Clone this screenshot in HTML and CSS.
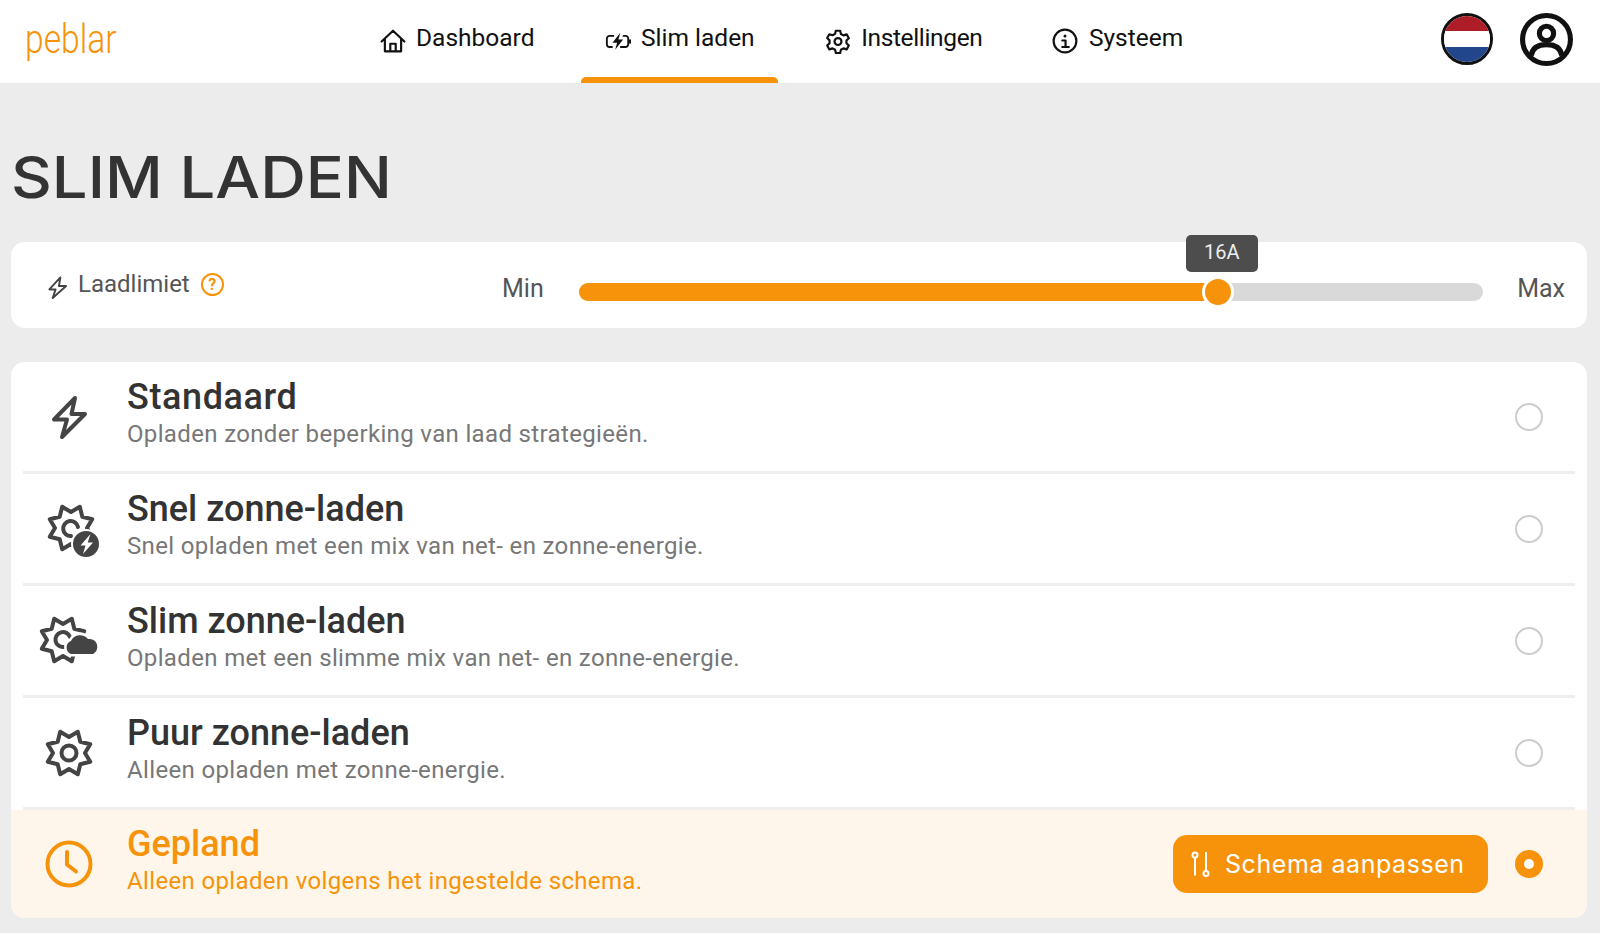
FILE: index.html
```html
<!DOCTYPE html>
<html lang="nl">

<head>
    <meta charset="UTF-8">
    <title>Slim laden</title>
    <link rel="stylesheet" href="styles.css">
</head>

<body>
    <!-- Shared star shape for the solar icons -->
    <svg class="defs" width="0" height="0">
        <symbol id="sun" viewBox="0 0 48 48">
            <polygon points="32.8,2.8 35.3,12.7 45.2,15.2 40,24 45.2,32.8 35.3,35.3 32.8,45.2 24,40 15.2,45.2 12.7,35.3 2.8,32.8 8,24 2.8,15.2 12.7,12.7 15.2,2.8 24,8" fill="none" stroke="currentColor" stroke-width="4" stroke-linejoin="round" />
        </symbol>
    </svg>

    <header class="topbar">
        <div class="logo">peblar</div>
        <nav class="nav">
            <a class="nav-item">
                <svg class="nav-icon" viewBox="0 0 24 24"><path d="M1.500 12.500 12 2.500l10.500 10M4.500 10v11.500h15V10M9.500 21.500v-7h5v7" /></svg>
                <span>Dashboard</span>
            </a>
            <a class="nav-item active">
                <svg class="nav-icon" viewBox="0 0 28 24"><path d="M9 6.500H5a3 3 0 0 0-3 3v6a3 3 0 0 0 3 3h2.500M20 6.500h2a3 3 0 0 1 3 3v6a3 3 0 0 1-3 3h-5M27 11v3" /><path class="solid" d="M16.500 3 8 14h5L11 21.500 19.500 10.500h-5z" /></svg>
                <span>Slim laden</span>
            </a>
            <a class="nav-item tight">
                <svg class="nav-icon" viewBox="0 0 24 24"><path d="M10 2.500h4l.7 3 2.300 1.300 3-.9 2 3.500-2.200 2.100v2.600l2.200 2.100-2 3.500-3-.9-2.300 1.300-.7 3h-4l-.7-3L7 18.800l-3 .9-2-3.500L4.200 14v-2.600L2 9.300l2-3.500 3 .9 2.300-1.300z" /><circle cx="12" cy="12.500" r="3.200" /></svg>
                <span>Instellingen</span>
            </a>
            <a class="nav-item">
                <svg class="nav-icon" viewBox="0 0 24 24"><circle cx="12" cy="12" r="10.500" /><path d="M9.500 11.500H12.500V17M9.500 17.500h6" /><circle class="solid" cx="12" cy="7.300" r="1.400" /></svg>
                <span>Systeem</span>
            </a>
        </nav>
        <div class="top-actions">
            <div class="flag"><span class="red"></span><span class="white"></span><span class="blue"></span></div>
            <svg class="user" viewBox="0 0 52 52"><circle cx="26" cy="26" r="23.500" /><circle cx="26" cy="20" r="7" /><path d="M11 42c1-8 7-11 15-11s14 3 15 11" /></svg>
        </div>
    </header>

    <main class="page">
        <h1>SLIM LADEN</h1>

        <section class="card limit">
            <div class="limit-label">
                <svg class="limit-bolt" viewBox="0 0 24 24"><path d="M15 1.500 3.500 14h6.500L7 23 21 10.500h-7.500z" /></svg>
                <span>Laadlimiet</span>
                <span class="help">?</span>
            </div>
            <span class="range-text">Min</span>
            <div class="slider">
                <div class="slider-fill" style="width: 70.650%"></div>
                <div class="slider-thumb" style="left: 70.650%"></div>
                <div class="slider-tip" style="left: 71.100%">16A</div>
            </div>
            <span class="range-text">Max</span>
        </section>

        <section class="card modes">
            <div class="mode">
                <div class="mode-icon">
                    <svg width="48" height="48" viewBox="0 0 48 48"><path class="line bold" d="M30 5 9 26.500h13L17 44 40 21H26.500z" /></svg>
                </div>
                <div class="mode-text">
                    <h2>Standaard</h2>
                    <p>Opladen zonder beperking van laad strategieën.</p>
                </div>
                <span class="radio"></span>
            </div>
            <div class="mode">
                <div class="mode-icon">
                    <svg class="shift" width="56" height="64" viewBox="0 0 56 64">
                        <use href="#sun" x="0" y="7" width="48" height="48" />
                        <path class="line bold" d="M31 30a7.500 7.500 0 1 0-7 9" />
                        <circle class="badge" cx="39" cy="47" r="14" />
                        <path class="badge-bolt" d="M43.500 37 33.500 48.500h5L36 57l10-11.500h-5.300z" />
                    </svg>
                </div>
                <div class="mode-text">
                    <h2>Snel zonne-laden</h2>
                    <p>Snel opladen met een mix van net- en zonne-energie.</p>
                </div>
                <span class="radio"></span>
            </div>
            <div class="mode">
                <div class="mode-icon">
                    <svg width="62" height="56" viewBox="0 0 62 56">
                        <use href="#sun" x="1" y="3" width="48" height="48" />
                        <path class="line bold" d="M32 24a7.500 7.500 0 1 0-6 10" />
                        <path class="cloud-gap" d="M33 41a7 7 0 0 1 0-13 10 10 0 0 1 17-2 8 8 0 0 1 5 15z" />
                        <path class="cloud" d="M33 41a7 7 0 0 1 0-13 10 10 0 0 1 17-2 8 8 0 0 1 5 15z" />
                    </svg>
                </div>
                <div class="mode-text">
                    <h2>Slim zonne-laden</h2>
                    <p>Opladen met een slimme mix van net- en zonne-energie.</p>
                </div>
                <span class="radio"></span>
            </div>
            <div class="mode">
                <div class="mode-icon">
                    <svg width="48" height="48" viewBox="0 0 48 48">
                        <use href="#sun" width="48" height="48" />
                        <circle class="line bold" cx="24" cy="24" r="7.500" />
                    </svg>
                </div>
                <div class="mode-text">
                    <h2>Puur zonne-laden</h2>
                    <p>Alleen opladen met zonne-energie.</p>
                </div>
                <span class="radio"></span>
            </div>
            <div class="mode selected">
                <div class="mode-icon">
                    <svg width="48" height="48" viewBox="0 0 48 48"><circle class="line bold" cx="24" cy="24" r="21.500" /><path class="line bold" d="M22 12v12.500l9 7" /></svg>
                </div>
                <div class="mode-text">
                    <h2>Gepland</h2>
                    <p>Alleen opladen volgens het ingestelde schema.</p>
                </div>
                <button class="schedule-btn">
                    <svg width="20" height="26" viewBox="0 0 20 26"><circle cx="4" cy="4" r="2.500" /><path d="M4 6.500V24.500M15 1v19" /><circle cx="15" cy="22.500" r="2.500" /></svg>
                    <span>Schema aanpassen</span>
                </button>
                <span class="radio on"></span>
            </div>
        </section>
    </main>
</body>

</html>
```

FILE: styles.css
```css
body {
    margin: 0;
    background-color: #ececec;
    font-family: 'Roboto', sans-serif;
    color: #333;
}

.defs {
    position: absolute;
}

/* Header */
.topbar {
    display: flex;
    align-items: center;
    height: 83px;
    background-color: #fff;
}

.logo {
    width: 356px;
    padding-left: 25px;
    padding-bottom: 5px;
    box-sizing: border-box;
    font-size: 40px;
    font-weight: 300;
    color: #f7930a;
    transform: scaleX(.84);
    transform-origin: 25px 0;
}

.nav {
    display: flex;
    gap: 23px;
    height: 100%;
}

.nav-item {
    display: flex;
    align-items: center;
    gap: 10.500px;
    padding: 0 23.500px 8px;
    font-size: 24.500px;
    color: #111;
    box-sizing: border-box;
    position: relative;
}

.nav-item.tight {
    letter-spacing: -.35px;
}

.nav-item.active::after {
    content: "";
    position: absolute;
    left: 0;
    right: 0;
    bottom: 0;
    height: 6px;
    background-color: #f7930a;
    border-radius: 5px 5px 0 0;
}

.nav-icon {
    width: 26px;
    height: 26px;
    margin-top: 6px;
    fill: none;
    stroke: #111;
    stroke-width: 2;
    stroke-linejoin: round;
    stroke-linecap: round;
}

.nav-icon .solid {
    fill: #111;
    stroke: none;
}

.top-actions {
    display: flex;
    align-items: center;
    gap: 27px;
    margin-left: auto;
    margin-right: 27px;
    padding-bottom: 5px;
}

.flag {
    display: flex;
    flex-direction: column;
    width: 52px;
    height: 52px;
    box-sizing: border-box;
    border: 3px solid #111;
    border-radius: 50%;
    overflow: hidden;
}

.flag span {
    flex: 1;
}

.flag .red {
    background-color: #ae1c28;
}

.flag .white {
    background-color: #fff;
}

.flag .blue {
    background-color: #21468b;
}

.user {
    width: 53px;
    height: 53px;
    fill: none;
    stroke: #111;
    stroke-width: 5;
}

/* Page */
.page {
    padding: 0 13px 0 11px;
}

h1 {
    width: fit-content;
    margin: 0;
    padding-top: 61px;
    height: 98px;
    font-family: 'Inter', sans-serif;
    font-size: 57px;
    line-height: 68px;
    font-weight: 500;
    color: #333;
    transform: scaleX(1.11);
    transform-origin: 0 0;
}

.card {
    background-color: #fff;
    border-radius: 14px;
}

.limit {
    display: flex;
    align-items: center;
    height: 86px;
    padding: 0 22px 0 35px;
    box-sizing: border-box;
    font-size: 25px;
}

.limit-label {
    display: flex;
    align-items: center;
    gap: 9px;
    width: 456px;
    padding-bottom: 2px;
    color: #555;
    font-size: 24px;
}

.limit-bolt {
    width: 23px;
    height: 27px;
    margin-top: 6px;
    fill: none;
    stroke: #444;
    stroke-width: 2;
    stroke-linejoin: round;
}

.help {
    display: flex;
    align-items: center;
    justify-content: center;
    width: 19px;
    height: 19px;
    margin-left: 2px;
    border: 2px solid #f7930a;
    border-radius: 50%;
    font-size: 16px;
    font-weight: 700;
    color: #f7930a;
}

.range-text {
    color: #555;
    padding-top: 6px;
}

.slider {
    position: relative;
    flex: 1;
    height: 18px;
    margin: 14px 34px 0 35px;
    background-color: #d9d9d9;
    border-radius: 9px;
}

.slider-fill {
    height: 100%;
    background-color: #f7930a;
    border-radius: 9px 0 0 9px;
}

.slider-thumb {
    position: absolute;
    top: 50%;
    width: 26px;
    height: 26px;
    transform: translate(-50%, -50%);
    background-color: #f7930a;
    border: 3px solid #fff;
    border-radius: 50%;
}

.slider-tip {
    position: absolute;
    top: -48px;
    width: 72px;
    height: 37px;
    line-height: 35px;
    transform: translateX(-50%);
    background-color: #4d4d4d;
    border-radius: 5px;
    color: #eee;
    font-size: 20px;
    text-align: center;
}

/* Charging modes */
.modes {
    margin-top: 34px;
    overflow: hidden;
}

.mode {
    display: flex;
    align-items: center;
    height: 109px;
    margin: 0 12px;
    padding-right: 32px;
    border-bottom: 3px solid #eee;
}

.mode-icon {
    display: flex;
    justify-content: center;
    width: 92px;
    margin-right: 12px;
    color: #444;
}

.shift {
    margin-left: 12px;
}

.line {
    fill: none;
    stroke: currentColor;
    stroke-width: 3.600;
    stroke-linejoin: round;
    stroke-linecap: round;
}

.line.bold {
    stroke-width: 4;
}

.badge {
    fill: #444;
    stroke: #fff;
    stroke-width: 2;
}

.badge-bolt {
    fill: #fff;
}

.cloud {
    fill: #444;
}

.cloud-gap {
    fill: none;
    stroke: #fff;
    stroke-width: 5;
}

.mode-text {
    flex: 1;
    padding-bottom: 6px;
}

.mode-text h2 {
    margin: 0;
    font-size: 36px;
    line-height: 40px;
    font-weight: 500;
    color: #333;
}

.mode:first-child h2 {
    letter-spacing: .6px;
}

.mode-text p {
    margin: 0;
    font-size: 24px;
    line-height: 34px;
    letter-spacing: .35px;
    color: #777;
}

.radio {
    width: 28px;
    height: 28px;
    box-sizing: border-box;
    border: 2px solid #ccc;
    border-radius: 50%;
    background-color: #fff;
}

.radio.on {
    border: 9px solid #f7930a;
    background-color: #fff;
}

.mode.selected {
    margin: 0;
    height: 108px;
    padding: 0 44px 0 12px;
    border-bottom: none;
    background-color: #fef6eb;
}

.selected .mode-icon {
    color: #f7930a;
}

.selected h2,
.selected p {
    color: #f7930a;
}

.schedule-btn {
    display: flex;
    align-items: center;
    gap: 14px;
    width: 315px;
    height: 58px;
    margin-right: 27px;
    padding: 0 18px;
    box-sizing: border-box;
    background-color: #f7930a;
    border: none;
    border-radius: 14px;
    color: #fff;
    font-family: 'Inter', sans-serif;
    font-size: 25px;
    letter-spacing: .55px;
}

.schedule-btn svg {
    fill: none;
    stroke: #fff;
    stroke-width: 2;
}
```
